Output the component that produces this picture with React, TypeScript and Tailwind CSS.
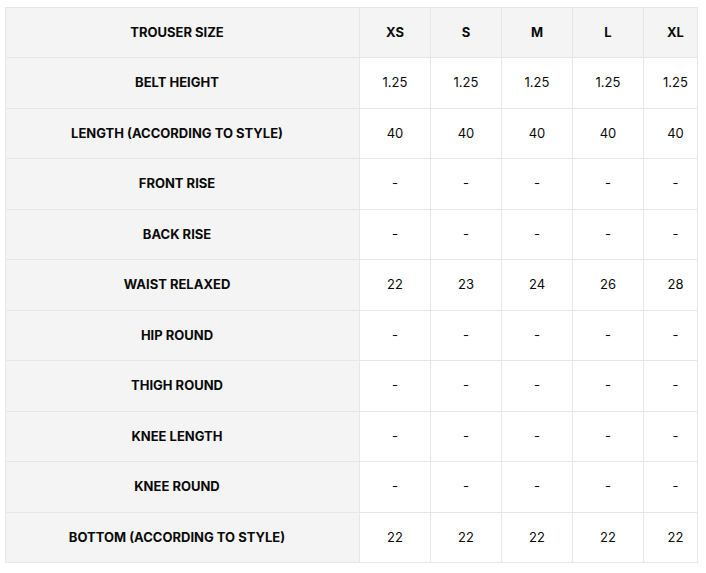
import React from "react";

const sizes = ["XS", "S", "M", "L", "XL"];
const rows: [string, string[]][] = [
  ["BELT HEIGHT", ["1.25", "1.25", "1.25", "1.25", "1.25"]],
  ["LENGTH (ACCORDING TO STYLE)", ["40", "40", "40", "40", "40"]],
  ["FRONT RISE", ["-", "-", "-", "-", "-"]],
  ["BACK RISE", ["-", "-", "-", "-", "-"]],
  ["WAIST RELAXED", ["22", "23", "24", "26", "28"]],
  ["HIP ROUND", ["-", "-", "-", "-", "-"]],
  ["THIGH ROUND", ["-", "-", "-", "-", "-"]],
  ["KNEE LENGTH", ["-", "-", "-", "-", "-"]],
  ["KNEE ROUND", ["-", "-", "-", "-", "-"]],
  ["BOTTOM (ACCORDING TO STYLE)", ["22", "22", "22", "22", "22"]],
];

function cellCls(j: number) {
  return j === 4
    ? "border border-[#e6e6e6] text-center p-0 pl-[10px]"
    : "border border-[#e6e6e6] text-center p-0";
}

export default function App() {
  return (
    <div className="w-[706px] h-[573px] bg-white pt-[7px] pl-[5px]" style={{ fontFamily: "Inter, 'Noto Sans', sans-serif" }}>
      <table className="table-fixed border-collapse w-[692px] text-[13px] text-[#0a0a0a]">
        <colgroup>
          <col className="w-[354px]" />
          <col className="w-[71px]" />
          <col className="w-[71px]" />
          <col className="w-[71px]" />
          <col className="w-[71px]" />
          <col className="w-[54px]" />
        </colgroup>
        <tbody>
          <tr className="h-[50px] bg-[#f4f4f4]">
            <td className="border border-[#e6e6e6] text-center font-bold p-0 pr-[11px]">TROUSER SIZE</td>
            {sizes.map((s, j) => (
              <td key={s} className={cellCls(j) + " font-bold"}>{s}</td>
            ))}
          </tr>
          {rows.map(([label, vals], i) => (
            <tr key={label} className={i % 2 === 0 ? "h-[51px]" : "h-[50px]"}>
              <td className="border border-[#e6e6e6] bg-[#f4f4f4] text-center font-bold p-0 pr-[11px]">{label}</td>
              {vals.map((v, j) => (
                <td key={j} className={cellCls(j)}>{v}</td>
              ))}
            </tr>
          ))}
        </tbody>
      </table>
    </div>
  );
}
